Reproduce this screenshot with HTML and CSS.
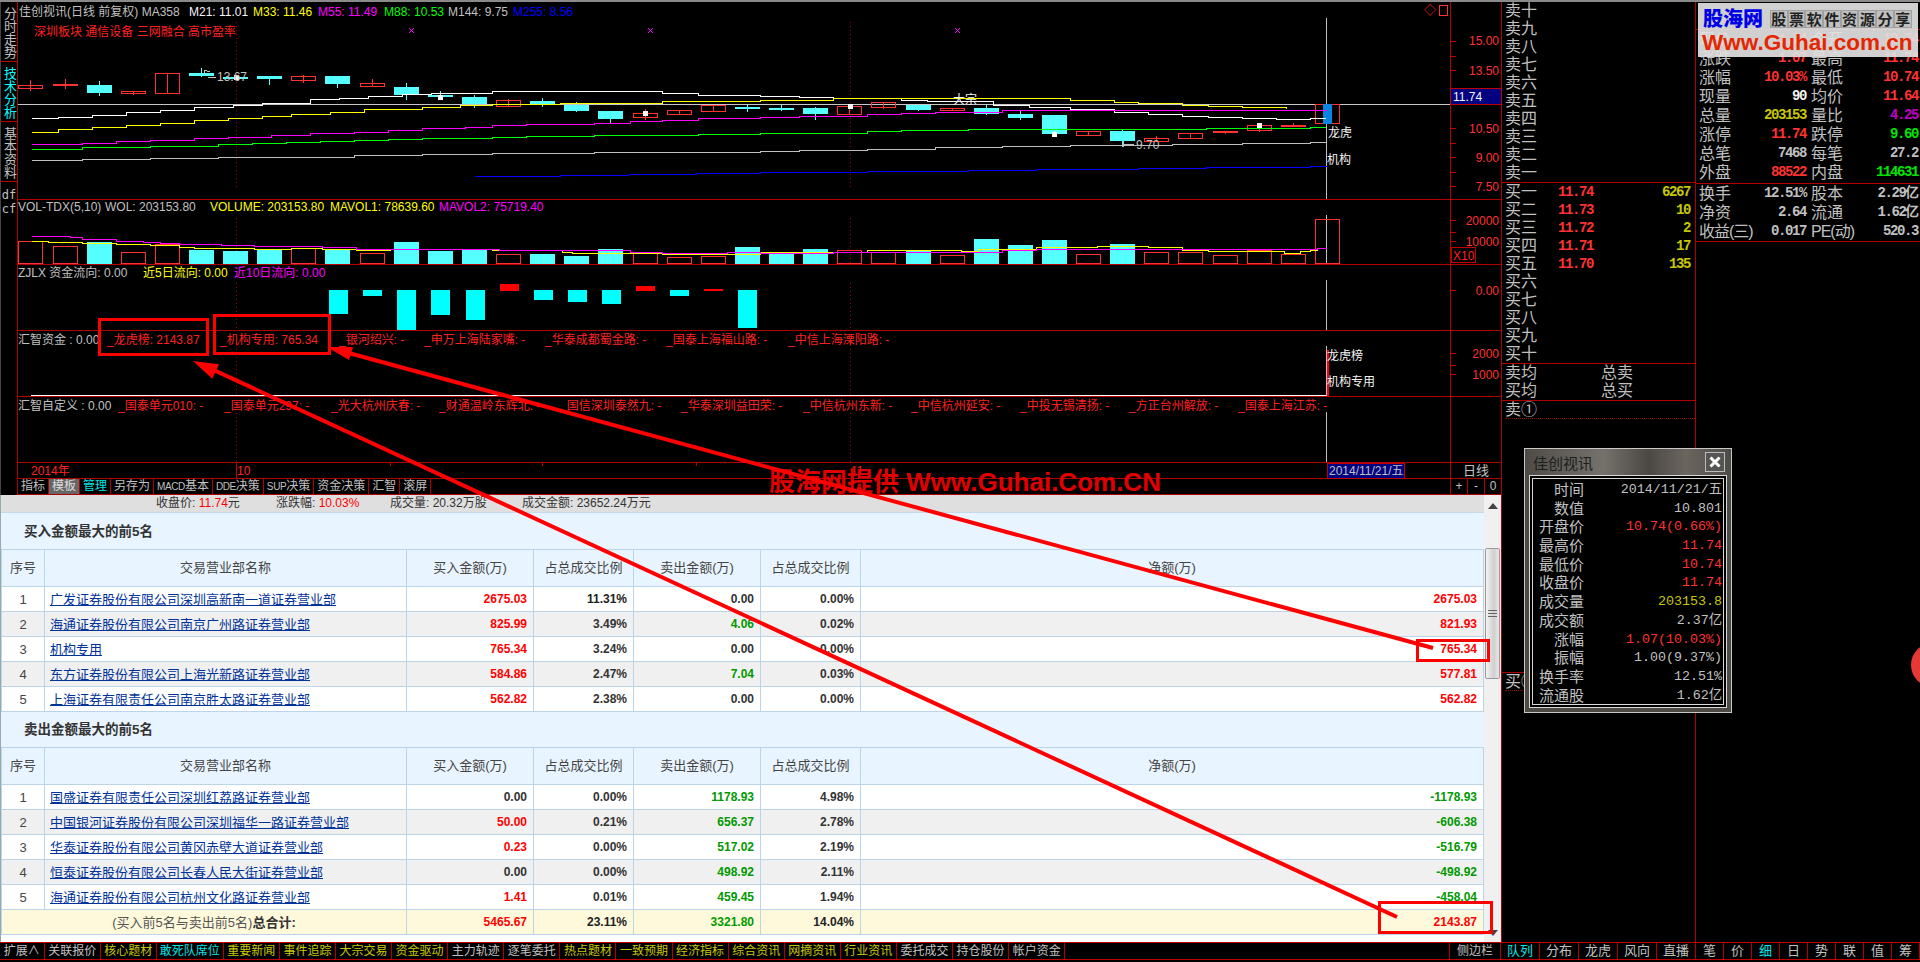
FILE: index.html
```html
<!DOCTYPE html>
<html lang="zh-CN">
<head>
<meta charset="utf-8">
<title>佳创视讯</title>
<link rel="stylesheet" href="styles.css">
</head>
<body>
<div class="app">
  <div class="topline"></div>
  <div class="body">
    <div class="left">
      <div class="stage">
        <nav class="rail">
          <div class="rail-tab">分时走势</div>
          <div class="rail-tab active">技术分析</div>
          <div class="rail-tab">基本资料</div>
          <div class="rail-small">df<br>cf</div>
        </nav>
        <div class="grid">
          <div class="cell"></div><div class="cell axis"></div>
          <div class="cell"></div><div class="cell axis"></div>
          <div class="cell"></div><div class="cell axis"></div>
          <div class="cell"></div><div class="cell axis"></div>
          <div class="cell"></div><div class="cell axis"></div>
          <div class="cell"></div><div class="cell axis daily">日线</div>
          <div class="cell tools">
            <span class="tool">指标</span><span class="tool sel">模板</span><span class="tool cy">管理</span><span class="tool">另存为</span><span class="tool"><i class="lat">MACD</i>基本</span><span class="tool"><i class="lat">DDE</i>决策</span><span class="tool"><i class="lat">SUP</i>决策</span><span class="tool">资金决策</span><span class="tool">汇智</span><span class="tool">滚屏</span>
          </div>
          <div class="cell axis zoomers"><span>+</span><span>-</span><span>0</span></div>
        </div>
        <svg class="plot" width="1502" height="493" viewBox="0 2 1502 493">
          <g id="graph"></g>
          <g class="t">
            <text x="19" y="16" class="w">佳创视讯(日线 前复权) MA358</text>
            <text x="189" y="16" class="wh">M21: 11.01</text>
            <text x="253" y="16" class="y">M33: 11.46</text>
            <text x="318" y="16" class="m">M55: 11.49</text>
            <text x="384" y="16" class="gr">M88: 10.53</text>
            <text x="448" y="16" class="w">M144: 9.75</text>
            <text x="513" y="16" class="b">M255: 8.56</text>
            <text x="34" y="36" class="r">深圳板块 通信设备 三网融合 高市盈率</text>
            <text x="217" y="81" class="w">13.67</text>
            <text x="1136" y="149" class="w">9.70</text>
            <text x="953" y="104" class="wh">大宗</text>
            <text x="1328" y="137" class="wh">龙虎</text>
            <text x="1327" y="164" class="wh">机构</text>
            <text x="1424" y="15" class="r">◇</text>
            <text x="18" y="211" class="w">VOL-TDX(5,10)</text>
            <text x="105" y="211" class="w">WOL: 203153.80</text>
            <text x="210" y="211" class="y">VOLUME: 203153.80</text>
            <text x="330" y="211" class="y">MAVOL1: 78639.60</text>
            <text x="439" y="211" class="m">MAVOL2: 75719.40</text>
            <text x="18" y="277" class="w">ZJLX 资金流向: 0.00</text>
            <text x="143" y="277" class="y">近5日流向: 0.00</text>
            <text x="234" y="277" class="m">近10日流向: 0.00</text>
            <text x="18" y="344" class="w">汇智资金 : 0.00</text>
            <text x="107" y="344" class="r">_龙虎榜: 2143.87</text>
            <text x="220" y="344" class="r">_机构专用: 765.34</text>
            <text x="339" y="344" class="r">_银河绍兴: -</text>
            <text x="424" y="344" class="r">_申万上海陆家嘴: -</text>
            <text x="545" y="344" class="r">_华泰成都蜀金路: -</text>
            <text x="666" y="344" class="r">_国泰上海福山路: -</text>
            <text x="788" y="344" class="r">_中信上海溧阳路: -</text>
            <text x="1327" y="360" class="wh">龙虎榜</text>
            <text x="1327" y="386" class="wh">机构专用</text>
            <text x="18" y="410" class="w">汇智自定义 : 0.00</text>
            <text x="118" y="410" class="r">_国泰单元010: -</text>
            <text x="224" y="410" class="r">_国泰单元297: -</text>
            <text x="331" y="410" class="r">_光大杭州庆春: -</text>
            <text x="439" y="410" class="r">_财通温岭东辉北: -</text>
            <text x="560" y="410" class="r">_国信深圳泰然九: -</text>
            <text x="681" y="410" class="r">_华泰深圳益田荣: -</text>
            <text x="803" y="410" class="r">_中信杭州东新: -</text>
            <text x="911" y="410" class="r">_中信杭州延安: -</text>
            <text x="1020" y="410" class="r">_中投无锡清扬: -</text>
            <text x="1129" y="410" class="r">_方正台州解放: -</text>
            <text x="1238" y="410" class="r">_国泰上海江苏: -</text>
            <text x="31" y="475" class="r">2014年</text>
            <text x="237" y="475" class="r">10</text>
            <text x="851" y="475" class="r">11</text>
            <rect x="1327.5" y="463.5" width="77" height="15" class="navy"></rect>
            <text x="1329" y="475" class="w">2014/11/21/五</text>
            <g class="ax">
              <text x="1499" y="45">15.00</text>
              <text x="1499" y="75">13.50</text>
              <text x="1499" y="133">10.50</text>
              <text x="1499" y="162">9.00</text>
              <text x="1499" y="191">7.50</text>
              <text x="1499" y="225">20000</text>
              <text x="1499" y="246">10000</text>
              <text x="1499" y="295">0.00</text>
              <text x="1499" y="358">2000</text>
              <text x="1499" y="379">1000</text>
            </g>
            <rect x="1450.5" y="88.5" width="51" height="16" class="navy"></rect>
            <text x="1453" y="101" class="wh">11.74</text>
            <rect x="1451.5" y="247.5" width="24" height="15" class="box"></rect>
            <text x="1453" y="260" class="r">X10</text>
          </g>
        </svg>
      </div>
      <section class="report">
        <div class="report-main">
          <div class="summary">
            <span>收盘价: <b>11.74</b>元</span><span>涨跌幅: <b>10.03%</b></span><span>成交量: 20.32万股</span><span>成交金额: 23652.24万元</span>
          </div>
          <h3 class="title">买入金额最大的前5名</h3>
          <table class="tbl">
            <colgroup><col class="c1"><col class="c2"><col class="c3"><col class="c4"><col class="c3"><col class="c4"><col></colgroup>
            <tr class="head"><th>序号</th><th>交易营业部名称</th><th>买入金额(万)</th><th>占总成交比例</th><th>卖出金额(万)</th><th>占总成交比例</th><th>净额(万)</th></tr>
            <tr><td class="idx">1</td><td class="nm"><a>广发证券股份有限公司深圳高新南一道证券营业部</a></td><td class="red">2675.03</td><td class="pct strong">11.31%</td><td class="zero">0.00</td><td class="pct">0.00%</td><td class="red">2675.03</td></tr>
            <tr class="alt"><td class="idx">2</td><td class="nm"><a>海通证券股份有限公司南京广州路证券营业部</a></td><td class="red">825.99</td><td class="pct">3.49%</td><td class="grn">4.06</td><td class="pct">0.02%</td><td class="red">821.93</td></tr>
            <tr><td class="idx">3</td><td class="nm"><a>机构专用</a></td><td class="red">765.34</td><td class="pct">3.24%</td><td class="zero">0.00</td><td class="pct">0.00%</td><td class="red">765.34</td></tr>
            <tr class="alt"><td class="idx">4</td><td class="nm"><a>东方证券股份有限公司上海光新路证券营业部</a></td><td class="red">584.86</td><td class="pct">2.47%</td><td class="grn">7.04</td><td class="pct">0.03%</td><td class="red">577.81</td></tr>
            <tr><td class="idx">5</td><td class="nm"><a>上海证券有限责任公司南京胜太路证券营业部</a></td><td class="red">562.82</td><td class="pct">2.38%</td><td class="zero">0.00</td><td class="pct">0.00%</td><td class="red">562.82</td></tr>
          </table>
          <h3 class="title">卖出金额最大的前5名</h3>
          <table class="tbl">
            <colgroup><col class="c1"><col class="c2"><col class="c3"><col class="c4"><col class="c3"><col class="c4"><col></colgroup>
            <tr class="head"><th>序号</th><th>交易营业部名称</th><th>买入金额(万)</th><th>占总成交比例</th><th>卖出金额(万)</th><th>占总成交比例</th><th>净额(万)</th></tr>
            <tr><td class="idx">1</td><td class="nm"><a>国盛证券有限责任公司深圳红荔路证券营业部</a></td><td class="zero">0.00</td><td class="pct">0.00%</td><td class="grn">1178.93</td><td class="pct">4.98%</td><td class="grn">-1178.93</td></tr>
            <tr class="alt"><td class="idx">2</td><td class="nm"><a>中国银河证券股份有限公司深圳福华一路证券营业部</a></td><td class="red">50.00</td><td class="pct">0.21%</td><td class="grn">656.37</td><td class="pct">2.78%</td><td class="grn">-606.38</td></tr>
            <tr><td class="idx">3</td><td class="nm"><a>华泰证券股份有限公司黄冈赤壁大道证券营业部</a></td><td class="red">0.23</td><td class="pct">0.00%</td><td class="grn">517.02</td><td class="pct">2.19%</td><td class="grn">-516.79</td></tr>
            <tr class="alt"><td class="idx">4</td><td class="nm"><a>恒泰证券股份有限公司长春人民大街证券营业部</a></td><td class="zero">0.00</td><td class="pct">0.00%</td><td class="grn">498.92</td><td class="pct">2.11%</td><td class="grn">-498.92</td></tr>
            <tr><td class="idx">5</td><td class="nm"><a>海通证券股份有限公司杭州文化路证券营业部</a></td><td class="red">1.41</td><td class="pct">0.01%</td><td class="grn">459.45</td><td class="pct">1.94%</td><td class="grn">-458.04</td></tr>
            <tr class="total"><td colspan="2" class="sum-label">(买入前5名与卖出前5名)<b>总合计:</b></td><td class="red">5465.67</td><td class="pct strong">23.11%</td><td class="grn">3321.80</td><td class="pct strong">14.04%</td><td class="red">2143.87</td></tr>
          </table>
        </div>
        <div class="scrollbar">
          <svg class="arr" width="10" height="6" viewBox="0 0 10 6"><path d="M5 0 L10 6 L0 6 Z"/></svg>
          <div class="thumb"><i></i><i></i><i></i></div>
          <svg class="arr arr-down" width="10" height="6" viewBox="0 0 10 6"><path d="M0 0 L10 0 L5 6 Z"/></svg>
        </div>
      </section>
    </div>
    <aside class="side">
      <div class="col-book">
        <div class="rows sect">
          <div class="row"><span>卖十</span></div><div class="row"><span>卖九</span></div><div class="row"><span>卖八</span></div><div class="row"><span>卖七</span></div><div class="row"><span>卖六</span></div><div class="row"><span>卖五</span></div><div class="row"><span>卖四</span></div><div class="row"><span>卖三</span></div><div class="row"><span>卖二</span></div><div class="row"><span>卖一</span></div>
        </div>
        <div class="rows sect">
          <div class="row"><span>买一</span><b class="px">11.74</b><b class="vol">6267</b></div>
          <div class="row"><span>买二</span><b class="px">11.73</b><b class="vol">10</b></div>
          <div class="row"><span>买三</span><b class="px">11.72</b><b class="vol">2</b></div>
          <div class="row"><span>买四</span><b class="px">11.71</b><b class="vol">17</b></div>
          <div class="row"><span>买五</span><b class="px">11.70</b><b class="vol">135</b></div>
          <div class="row"><span>买六</span></div><div class="row"><span>买七</span></div><div class="row"><span>买八</span></div><div class="row"><span>买九</span></div><div class="row"><span>买十</span></div>
        </div>
        <div class="rows sect">
          <div class="row"><span>卖均</span><span class="tot">总卖</span></div>
          <div class="row"><span>买均</span><span class="tot">总买</span></div>
        </div>
        <div class="rows ticks">
          <div class="row dotted"><span>卖①</span></div>
        </div>
        <div class="rows ticks2">
          <div class="row dotted"><span>买①</span></div>
        </div>
      </div>
      <div class="col-quote">
        <div class="q-block first">
          <div class="q"><span>现价</span><b class="vr">11.74</b><span>今开</span><b class="vr">10.74</b></div>
          <div class="q"><span>涨跌</span><b class="vr">1.07</b><span>最高</span><b class="vr">11.74</b></div>
          <div class="q"><span>涨幅</span><b class="vr">10.03%</b><span>最低</span><b class="vr">10.74</b></div>
          <div class="q"><span>现量</span><b class="vw">90</b><span>均价</span><b class="vr">11.64</b></div>
          <div class="q"><span>总量</span><b class="vy">203153</b><span>量比</span><b class="vm">4.25</b></div>
          <div class="q"><span>涨停</span><b class="vr">11.74</b><span>跌停</span><b class="vg">9.60</b></div>
          <div class="q"><span>总笔</span><b class="vs">7468</b><span>每笔</span><b class="vs">27.2</b></div>
          <div class="q"><span>外盘</span><b class="vr">88522</b><span>内盘</span><b class="vg">114631</b></div>
        </div>
        <div class="q-block">
          <div class="q"><span>换手</span><b class="vs">12.51%</b><span>股本</span><b class="vs">2.29亿</b></div>
          <div class="q"><span>净资</span><b class="vs">2.64</b><span>流通</span><b class="vs">1.62亿</b></div>
          <div class="q"><span>收益(三)</span><b class="vs">0.017</b><span>PE(动)</span><b class="vs">520.3</b></div>
        </div>
      </div>
    </aside>
  </div>
  <footer class="bottom">
    <span class="bt w45">扩展∧</span><span class="bt">关联报价</span><span class="bt yl">核心题材</span><span class="bt w67 cy">敢死队席位</span><span class="bt yl">重要新闻</span><span class="bt yl">事件追踪</span><span class="bt yl">大宗交易</span><span class="bt yl">资金驱动</span><span class="bt">主力轨迹</span><span class="bt">逐笔委托</span><span class="bt yl">热点题材</span><span class="bt yl">一致预期</span><span class="bt yl">经济指标</span><span class="bt yl">综合资讯</span><span class="bt yl">网摘资讯</span><span class="bt yl">行业资讯</span><span class="bt">委托成交</span><span class="bt">持仓股份</span><span class="bt">帐户资金</span>
    <span class="bt sidebar">侧边栏</span>
    <span class="bt2 cy">队列</span><span class="bt2">分布</span><span class="bt2">龙虎</span><span class="bt2">风向</span><span class="bt2">直播</span>
    <span class="bt1">笔</span><span class="bt1">价</span><span class="bt1 cy">细</span><span class="bt1">日</span><span class="bt1">势</span><span class="bt1">联</span><span class="bt1">值</span><span class="bt1">筹</span>
  </footer>

  <div class="logo">
    <div class="logo-top"><b class="logo-name">股海网</b><span class="logo-tiles"><i>股</i><i>票</i><i>软</i><i>件</i><i>资</i><i>源</i><i>分</i><i>享</i></span></div>
    <div class="logo-url">Www.Guhai.com.cn</div>
  </div>

  <div class="popup">
    <div class="pop-title"><span>佳创视讯</span><span class="pop-close"><svg width="12" height="12" viewBox="0 0 12 12"><path d="M1.5 1.5 L10.5 10.5 M10.5 1.5 L1.5 10.5"/></svg></span></div>
    <div class="pop-frame">
      <div class="pr"><span>时间</span><em>2014/11/21/五</em></div>
      <div class="pr"><span>数值</span><em>10.801</em></div>
      <div class="pr"><span>开盘价</span><em class="pv-r">10.74(0.66%)</em></div>
      <div class="pr"><span>最高价</span><em class="pv-r">11.74</em></div>
      <div class="pr"><span>最低价</span><em class="pv-r">10.74</em></div>
      <div class="pr"><span>收盘价</span><em class="pv-r">11.74</em></div>
      <div class="pr"><span>成交量</span><em class="pv-y">203153.8</em></div>
      <div class="pr"><span>成交额</span><em>2.37亿</em></div>
      <div class="pr"><span>涨幅</span><em class="pv-r">1.07(10.03%)</em></div>
      <div class="pr"><span>振幅</span><em>1.00(9.37%)</em></div>
      <div class="pr"><span>换手率</span><em>12.51%</em></div>
      <div class="pr"><span>流通股</span><em>1.62亿</em></div>
    </div>
  </div>

  <div class="dot-red"></div>
  <div class="stamp">股海网提供 Www.Guhai.Com.CN</div>

  <svg class="marks" width="1920" height="962" viewBox="0 0 1920 962">
    <rect x="99.5" y="319.5" width="108" height="35"></rect>
    <rect x="214.5" y="315.5" width="115" height="38"></rect>
    <rect x="1417.5" y="640.5" width="71" height="20"></rect>
    <rect x="1379.5" y="902.5" width="112" height="30"></rect>
    <path class="ln" d="M1397 917 L205 366"></path>
    <path class="hd" d="M193 361 L212.3 378.8 L219 364.2 Z"></path>
    <path class="ln" d="M1433 648 L345 352"></path>
    <path class="hd" d="M327 347 L349 360 L353 347 Z"></path>
  </svg>
</div>
<script src="chart.js"></script>
</body>
</html>
```

FILE: styles.css
```css
* { box-sizing: border-box; }
html, body { margin: 0; padding: 0; background: #000; }
.app {
  position: relative; width: 1920px; height: 962px; overflow: hidden;
  display: flex; flex-direction: column; background: #000; color: #c0c0c0;
  font-family: "Liberation Sans", "Noto Sans CJK SC", sans-serif; font-size: 12px;
}
.topline { height: 2px; background: #8a8a8a; flex: none; }
.body { display: flex; height: 940px; flex: none; }
.left { width: 1502px; flex: none; display: flex; flex-direction: column; }

.stage { position: relative; display: flex; height: 493px; flex: none; }
.rail { width: 18px; flex: none; border-left: 1px solid #444; border-right: 1px solid #b00000; }
.rail-tab {
  height: 60px; padding-top: 5px; border-bottom: 1px solid #c00000; writing-mode: vertical-rl; text-orientation: upright;
  font-size: 13px; line-height: 16px; letter-spacing: 0; text-align: left;
}
.rail-tab.active { color: #00ffff; }
.rail-small { font-size: 12px; line-height: 14px; padding-top: 6px; text-align: center; font-family: "DejaVu Sans Mono", monospace; }
.grid {
  display: grid; grid-template-columns: 1432px 52px;
  grid-template-rows: 198px 65px 66px 66px 66px 16px 16px;
}
.cell { border-bottom: 1px solid #b00000; }
.axis { border-left: 1px solid #b00000; border-right: 1px solid #b00000; }
.daily { text-align: center; line-height: 15px; font-size: 13px; }
.tools { display: flex; }
.tool { padding: 0 3px; line-height: 15px; border-right: 1px solid #b00000; font-size: 12px; height: 15px; white-space: nowrap; }
.tool .lat { font-style: normal; font-size: 10px; letter-spacing: -0.4px; }
.tool.sel { background: #666; color: #ddd; }
.cy { color: #00e6e6; }
.yl { color: #c8c800; }
.zoomers { display: flex; }
.zoomers span { flex: 1; text-align: center; line-height: 14px; border-right: 1px solid #b00000; }
.zoomers span:last-child { border-right: 0; }

.plot { position: absolute; left: 0; top: 0; shape-rendering: crispEdges; pointer-events: none; }
.t text { font-size: 12px; font-family: "Liberation Sans", "Noto Sans CJK SC", sans-serif; }
.t .w { fill: #c0c0c0; }
.t .wh { fill: #f4f4f4; }
.t .y { fill: #ffff00; }
.t .m { fill: #ff00ff; }
.t .gr { fill: #00ff00; }
.t .b { fill: #0000ff; }
.t .r { fill: #ff2020; }
.ax text { fill: #ff3232; text-anchor: end; }
.navy { fill: #000080; stroke: #c00000; }
.box { fill: none; stroke: #c00000; }

/* report */
.report { height: 447px; flex: none; display: flex; background: #fff; color: #333; }
.report-main { width: 1484px; flex: none; border-left: 1px solid #9aa; }
.summary {
  height: 18px; background: #dfdfdf; padding-left: 155px; display: flex; gap: 0;
  font-size: 12px; line-height: 17px; overflow: hidden; color: #333; border-bottom: 1px solid #c5d9ea;
}
.summary span:nth-child(1) { width: 120px; }
.summary span:nth-child(2) { width: 114px; }
.summary span:nth-child(3) { width: 132px; }
.summary b { color: #f00; font-weight: normal; }
.title {
  margin: 0; height: 36px; background: #e8f4ff; padding-left: 23px; font-size: 13.5px; line-height: 38px;
  font-weight: bold; color: #333;
}
.title:nth-of-type(2) { height: 35px; line-height: 35px; }
.tbl { width: 1483px; border-collapse: collapse; table-layout: fixed; font-size: 12px; }
.tbl .c1 { width: 43px; }
.tbl .c2 { width: 362px; }
.tbl .c3 { width: 127px; }
.tbl .c4 { width: 100px; }
.tbl th, .tbl td { border: 1px solid #bcd4e8; padding: 0; }
.tbl tr { height: 25px; }
.tbl tr.head { height: 37px; background: #e8f4ff; }
.tbl th { font-weight: normal; font-size: 13px; color: #444; padding-bottom: 3px; }
.tbl tr.alt { background: #f0f0f0; }
.tbl tr.total { background: #fff9dc; }
.tbl td { text-align: right; padding-right: 6px; font-weight: bold; }
.tbl td.idx { text-align: center; padding: 0; font-size: 13px; font-weight: normal; color: #444; }
.tbl td.nm { text-align: left; padding: 0 0 2px 5px; font-weight: normal; font-size: 13px; }
.tbl a { color: #003399; text-decoration: underline; }
.tbl .red { color: #f00; }
.tbl .grn { color: #009900; }
.tbl .pct, .tbl .zero { color: #333; }
.tbl .pct.strong { color: #222; }
.tbl td.sum-label { text-align: center; font-weight: normal; font-size: 13px; color: #555; padding: 0 0 2px 0; }
.sum-label b { color: #333; }
.scrollbar { flex: 1; background: #f0f0f0; position: relative; border-right: 1px solid #b00000; }
.arr { position: absolute; left: 4px; top: 8px; fill: #444; }
.arr-down { top: 435px; }
.thumb {
  position: absolute; left: 1px; top: 53px; width: 15px; height: 131px; border: 1px solid #999; border-radius: 2px;
  background: linear-gradient(90deg, #f4f4f4, #cfcfcf 60%, #e8e8e8);
  display: flex; flex-direction: column; justify-content: center; align-items: center; gap: 2px;
}
.thumb i { display: block; width: 9px; height: 1px; background: #666; }

/* side */
.side { width: 418px; flex: none; display: flex; font-size: 16px; color: #c0c0c0; }
.col-book { width: 194px; flex: none; border-right: 1px solid #b00000; }
.col-quote { flex: 1; padding-top: 27px; }
.rows { padding-left: 3px; }
.sect { border-bottom: 1px solid #b00000; }
.row { height: 18px; display: flex; align-items: center; line-height: 18px; white-space: nowrap; }
.row span { width: 33px; flex: none; }
.row .tot { margin-left: 63px; }
.sect:nth-child(3) { height: 37px; }
.px, .vol, .q b { font-family: "Liberation Mono", monospace; font-size: 14px; letter-spacing: -1.4px; font-weight: bold; }
.px { color: #ff3232; margin-left: 20px; width: 40px; }
.vol { color: #c8c800; margin-left: auto; margin-right: 5px; }
.ticks { height: 271px; }
.dotted { border-bottom: 1px dotted #a00000; }
.ticks2 { border-top: 1px solid #b00000; }
.q-block { border-top: 1px solid #b00000; border-bottom: 1px solid #b00000; padding: 0 2px 0 3px; }
.q-block.first { border-bottom: 0; height: 154px; }
.q-block:not(.first) { height: 59px; padding-top: 0; }
.q { display: grid; grid-template-columns: 44px 63px 5px 60px 1fr; height: 19px; line-height: 19px; white-space: nowrap; }
.q span:nth-of-type(1) { grid-column: 1; }
.q b:nth-of-type(1) { grid-column: 2; text-align: right; line-height: 19px; }
.q span:nth-of-type(2) { grid-column: 4; }
.q b:nth-of-type(2) { grid-column: 5; text-align: right; line-height: 19px; }
.q span { font-size: 16px; }
.q-block:not(.first) .q:last-child span { letter-spacing: -1px; }
.vr { color: #ff3232; }
.vw { color: #f4f4f4; }
.vy { color: #c8c800; }
.vm { color: #c000c0; }
.vg { color: #00e600; }
.vs { color: #c0c0c0; }

/* bottom */
.bottom {
  display: flex; height: 18px; flex: none; border-top: 1px solid #c00000; border-bottom: 1px solid #c00000;
  font-size: 12px; line-height: 16px;
}
.bt { width: 56.1px; flex: none; text-align: center; border-right: 1px solid #b00000; }
.bt.w45 { width: 44.6px; }
.bt.w67 { width: 67px; }
.bt.sidebar { width: 52px; margin-left: auto; border-left: 1px solid #b00000; }
.bt2 { width: 39px; flex: none; text-align: center; border-right: 1px solid #b00000; font-size: 13px; }
.bt1 { width: 28px; flex: none; text-align: center; border-right: 1px solid #b00000; font-size: 13px; }

/* overlays */
.logo {
  position: absolute; left: 1698px; top: 3px; width: 220px; height: 54px; background: rgba(226,226,226,.92);
  padding: 5px 3px 0 4px;
}
.logo-top { display: flex; align-items: center; height: 22px; }
.logo-name { color: #0000e6; font-size: 20px; line-height: 24px; width: 68px; padding-left: 1px; flex: none; font-weight: 900; }
.logo-tiles { display: flex; }
.logo-tiles i { width: 17.7px; height: 18px; background: #c0c0c0; border: 1px solid #a0a0a0; color: #222; font: bold 15px/16px "Noto Sans CJK SC", sans-serif; text-align: center; }
.logo-url { color: #e62600; font-weight: bold; font-size: 22.5px; line-height: 25px; letter-spacing: 0; white-space: nowrap; }

.popup {
  position: absolute; left: 1524px; top: 448px; width: 208px; height: 265px;
  background: #4e4b47; border: 1px solid #c8c8c8; padding: 0 4px 4px 4px;
}
.pop-title {
  height: 26px; display: flex; justify-content: space-between; align-items: center; padding-left: 4px; padding-right: 2px;
  font-size: 15px; color: #1d1d1d;
  background: linear-gradient(90deg, #4e4b47, #75716b 38%, #4b4844 60%, #6b655f 78%, #4e4b47);
  margin: 0 -4px; padding-left: 8px; padding-right: 6px;
}
.pop-close { width: 20px; height: 20px; display: flex; align-items: center; justify-content: center; border: 1px solid #bbb; background: #555; }
.pop-close path { stroke: #fff; stroke-width: 3; fill: none; }
.pop-frame { background: #000; border: 4px double #d8d8d8; height: 233px; padding-top: 2px; }
.pr { display: flex; justify-content: space-between; height: 18.7px; line-height: 18.7px; padding: 0 1px 0 0; white-space: nowrap; }
.pr span { width: 51px; text-align: right; font-size: 15px; color: #c0c0c0; flex: none; }
.pr em { font-style: normal; font-family: "Liberation Mono", "Noto Sans CJK SC", monospace; font-size: 13.33px; color: #c0c0c0; }
.pr .pv-r { color: #ff3232; }
.pr .pv-y { color: #c8c800; }
.dot-red { position: absolute; left: 1911px; top: 643px; width: 44px; height: 44px; border-radius: 50%; background: #e53935; }
.stamp {
  position: absolute; left: 769px; top: 465px; font-size: 26px; line-height: 34px; font-weight: bold; color: #e00000; white-space: nowrap;
}
.marks { position: absolute; left: 0; top: 0; pointer-events: none; }
.marks rect { fill: none; stroke: #ff0000; stroke-width: 3; }
.marks .ln { fill: none; stroke: #ff0000; stroke-width: 4; }
.marks .hd { fill: #ff0000; }
```

FILE: chart.js
```js
(function () {
  var NS = 'http://www.w3.org/2000/svg';
  var g = document.getElementById('graph');
  function el(name, attrs) {
    var e = document.createElementNS(NS, name);
    for (var k in attrs) e.setAttribute(k, attrs[k]);
    g.appendChild(e);
    return e;
  }
  var X1 = function (x) { return x / 2.063; };
  var X2 = function (x) { return 760 + x / 2.063; };
  var RED = '#ff3232', CY = '#55ffff';
  function left(i) { return Math.round(18.4 + i * 34.12); }

  function rect(x, y, w, h, fill) { el('rect', { x: x, y: y, width: w, height: h, fill: fill }); }
  function hollow(x, y, w, h, stroke, sw) {
    el('rect', { x: x + 0.5, y: y + 0.5, width: w, height: h, fill: 'none', stroke: stroke, 'stroke-width': sw || 1 });
  }
  function vline(x, y1, y2, color, dash) {
    var a = { x1: x + 0.5, x2: x + 0.5, y1: y1, y2: y2, stroke: color };
    if (dash) a['stroke-dasharray'] = dash;
    el('line', a);
  }
  function step(pts, color, w) {
    var d = '';
    pts.forEach(function (p, i) {
      var x = Math.round(p[0]), y = Math.round(p[1]) + 0.5;
      d += i === 0 ? 'M' + x + ' ' + y : ' H' + x + ' V' + y;
    });
    el('path', { d: d, fill: 'none', stroke: color, 'stroke-width': w || 1 });
  }
  function pts(a, b, oy) {
    var out = [];
    oy = oy || 0;
    (a || []).forEach(function (p) { out.push([X1(p[0]), oy + p[1] / 3]); });
    (b || []).forEach(function (p) { out.push([X2(p[0]), oy + p[1] / 3]); });
    return out;
  }

  /* dotted month separators and the cursor */
  [236, 850].forEach(function (x) {
    [[22, 187], [218, 264], [283, 330], [345, 396], [413, 462]].forEach(function (s) {
      vline(x, s[0], s[1], '#b00000', '1 3');
    });
  });
  [[18, 199], [215, 264], [280, 330], [346, 396], [412, 462]].forEach(function (s) {
    vline(1326, s[0], s[1], '#c0c0c0');
  });
  el('line', { x1: 18, x2: 1450, y1: 104.5, y2: 104.5, stroke: '#c8c8c8' });

  /* candles: type, top, bottom, wick top, wick bottom (y in 3x units) */
  var candles = [
    ['r', 255, 263, 240, 272], ['f', 252, 258, 238, 266], ['c', 255, 278, 243, 288], ['r', 274, 281, 274, 284],
    ['r', 220, 281, 220, 281], ['c', 219, 228, 205, 232], ['c', 230, 233, 225, 240], ['c', 228, 237, 228, 255],
    ['r', 229, 242, 225, 248], ['c', 228, 252, 228, 263], ['r', 250, 260, 237, 260], ['c', 261, 284, 249, 300],
    ['c', 286, 291, 273, 297], ['c', 291, 313, 285, 323], ['r', 301, 320, 297, 320], ['c', 303, 313, 294, 320],
    ['c', 315, 332, 307, 336], ['c', 333, 357, 333, 372], ['r', 340, 353, 327, 360], ['r', 331, 344, 331, 344],
    ['r', 316, 335, 316, 335], ['c', 320, 324, 312, 336], ['c', 324, 330, 312, 332], ['c', 324, 342, 321, 359],
    ['r', 319, 344, 319, 344], ['r', 306, 320, 306, 327], ['c', 314, 330, 314, 332], ['r', 325, 332, 325, 332],
    ['c', 324, 342, 315, 345], ['c', 342, 354, 333, 360], ['c', 345, 402, 345, 402], ['r', 393, 404, 393, 404],
    ['c', 393, 423, 389, 441], ['r', 415, 425, 408, 425], ['r', 400, 416, 400, 416], ['f', 393, 398, 393, 402],
    ['r', 376, 392, 370, 395], ['f', 375, 380, 369, 382], ['r', 313, 371, 313, 371]
  ];
  candles.forEach(function (c, i) {
    var x = left(i), mid = x + 12, col = c[0] === 'c' ? CY : RED;
    vline(mid, c[3] / 3, c[4] / 3, col);
    var y = Math.round(c[1] / 3), h = Math.max(2, Math.round((c[2] - c[1]) / 3));
    if (c[0] === 'r') hollow(x, y, 24, h, RED);
    else rect(x, y, 25, h, col);
  });
  rect(1323, 104, 9, 20, '#0a84e0');

  /* moving averages */
  step(pts([[65,355],[120,350],[190,345],[260,335],[330,330],[400,322],[480,315],[540,308],[640,298],[700,295],[760,287],[830,282],[890,278],[1015,274],[1300,274],[1365,280],[1440,284],[1568,287]],
    [[0,289],[80,292],[150,294],[290,300],[345,304],[480,315],[555,320],[640,328],[730,337],[800,343],[870,348],[925,352],[995,354],[1065,358],[1135,355],[1168,355]]), '#ffffff', 1);
  step(pts([[65,395],[120,388],[190,380],[260,375],[330,370],[400,360],[470,353],[540,348],[600,342],[680,335],[750,326],[870,320],[950,316],[1015,313],[1155,308],[1365,304],[1440,302],[1568,300]],
    [[0,299],[150,295],[360,293],[570,295],[640,300],[730,306],[780,310],[870,314],[925,318],[995,322],[1085,324]]), '#ffff00', 1);
  step(pts([[65,433],[170,428],[240,424],[310,420],[400,415],[470,410],[560,406],[640,400],[730,396],[800,390],[870,385],[960,380],[1015,376],[1085,373],[1225,368],[1300,364],[1365,360],[1440,355],[1568,352]],
    [[0,352],[80,349],[220,343],[290,340],[360,337],[500,331],[1168,328]]), '#ff00ff', 1);
  step(pts([[65,448],[170,442],[310,438],[450,433],[520,430],[590,426],[660,423],[730,420],[800,418],[870,415],[1015,412],[1085,409],[1225,406],[1440,403],[1568,400]],
    [[0,400],[80,398],[220,394],[290,391],[430,388],[920,385],[1135,382],[1168,382]]), '#00ff00', 1);
  step(pts([[65,481],[170,478],[310,475],[450,472],[590,470],[730,466],[870,463],[1015,460],[1225,457],[1365,455],[1568,454]],
    [[0,453],[80,450],[220,446],[360,442],[500,439],[640,436],[850,433],[995,430],[1135,427],[1168,427]]), '#c0c0c0', 1);
  step(pts([[980,529],[1155,525],[1295,521],[1435,518],[1568,517]],
    [[0,517],[80,515],[220,512],[430,509],[570,506],[780,505],[920,501],[1135,498],[1168,496]]), '#0000ff', 1);

  /* extreme markers, info squares and the little flags */
  [[411, 30], [650, 30], [957, 30]].forEach(function (p) {
    var d = 'M' + (p[0] - 2) + ' ' + (p[1] - 2) + ' L' + (p[0] + 3) + ' ' + (p[1] + 3) + ' M' + (p[0] + 3) + ' ' + (p[1] - 2) + ' L' + (p[0] - 2) + ' ' + (p[1] + 3);
    el('path', { d: d, stroke: '#ff00ff', 'stroke-width': 1.4, fill: 'none' });
  });
  [[236, 77], [440, 97], [645, 113], [850, 106], [1054, 134], [1259, 125]].forEach(function (p) {
    rect(p[0] - 2, p[1] - 2, 5, 5, '#ffffff');
  });
  hollow(1439, 5, 8, 10, RED);

  /* axis ticks */
  [41, 56, 70, 128, 143, 157, 172, 186, 220, 232, 241, 290, 353, 365, 374].forEach(function (y) {
    el('line', { x1: 1451, x2: 1456, y1: y + 0.5, y2: y + 0.5, stroke: '#c00000' });
  });
  [390, 542, 696].forEach(function (x) {
    el('line', { x1: x + 0.5, x2: x + 0.5, y1: 463, y2: 466, stroke: '#c00000' });
  });
  vline(236, 463, 478, '#c00000');

  /* volume bars */
  var vol = [123,138,127,157,131,150,153,150,145,150,160,126,153,150,163,162,168,148,158,172,168,141,
             156,147,151,156,153,165,117,135,120,162,132,156,156,165,150,162,58];
  vol.forEach(function (top, i) {
    var c = candles[i], x = left(i), y = Math.round(200 + top / 3), h = 264 - y;
    if (c[0] === 'c') rect(x, y, 25, h, CY);
    else hollow(x, y, 24, h - 1, RED);
  });
  step(pts([[65,124],[100,127],[170,128],[240,132],[310,135],[370,140],[400,143],[455,145],[525,148],[590,147],[600,145],[665,146],[735,150],[805,147],[875,146],[945,148],[1015,150],[1160,155],[1180,160],[1290,160],[1365,162],[1500,162],[1568,158]],
    [[0,157],[80,157],[150,155],[220,151],[360,151],[415,152],[450,148],[500,146],[570,141],[640,142],[695,139],[800,142],[870,150],[925,154],[995,154],[1080,160],[1115,153],[1135,149],[1150,145],[1168,140]], 200), '#ffff00', 1);
  step(pts([[65,109],[145,112],[170,116],[195,118],[240,122],[295,125],[330,128],[370,131],[455,135],[525,139],[665,142],[735,146],[1030,151],[1300,155],[1365,158],[1500,157],[1568,157]],
    [[0,159],[150,157],[290,155],[415,155],[500,150],[570,146],[710,148],[730,146],[925,146],[1120,148],[1150,143],[1168,140]], 200), '#ff00ff', 1);

  /* fund flow bars */
  [[679,270,342,'c'],[749,270,288,'c'],[819,270,390,'c'],[889,270,345,'c'],[961,270,360,'c'],[1032,252,272,'f'],
   [1102,270,300,'c'],[1172,270,306,'c'],[1242,270,312,'c'],[1312,258,272,'f'],[1382,270,288,'c'],[1452,266,272,'f'],[1523,270,384,'c']
  ].forEach(function (b) {
    var y = Math.round(200 + b[1] / 3), h = Math.round((b[2] - b[1]) / 3);
    rect(Math.round(X1(b[0])), y, 19, h, b[3] === 'c' ? '#00ffff' : '#ff0000');
  });

  /* seat flow baseline */
  el('line', { x1: 31, x2: 1326, y1: 395.5, y2: 395.5, stroke: '#ffffff' });
  rect(1327, 350, 2, 46, '#ff0000');
  /* small tail marks at the extreme labels */
  el('path', { d: 'M204 70 V75 M204 70 L210 72 M208 77 H216', stroke: '#c0c0c0', fill: 'none' });
  el('path', { d: 'M1123 141 V147 M1123 144 H1134', stroke: '#c0c0c0', fill: 'none' });
})();
```
